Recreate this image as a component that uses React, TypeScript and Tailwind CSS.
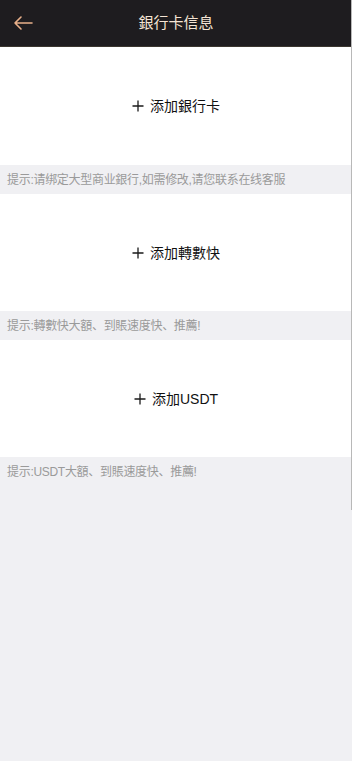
import React from "react";

const font = { fontFamily: '"Liberation Sans", "Noto Sans CJK SC", sans-serif' };

function Plus() {
  return (
    <svg width="12" height="12" viewBox="0 0 12 12" className="mr-[6px]">
      <path d="M6 0.5V11.5M0.5 6H11.5" stroke="#1a1a1a" strokeWidth="1.3" fill="none" />
    </svg>
  );
}

function AddBlock({ label, h }: { label: string; h: string }) {
  return (
    <div className={`${h} bg-white flex items-center justify-center`}>
      <div className="flex items-center text-[14px] text-[#111] leading-none">
        <Plus />
        <span>{label}</span>
      </div>
    </div>
  );
}

function Tip({ text }: { text: string }) {
  return (
    <div className="h-[29px] bg-[#f0f0f3] flex items-center px-[7px] text-[12px] text-[#9a9a9a] tracking-[-0.3px] leading-none">
      {text}
    </div>
  );
}

export default function App() {
  return (
    <div className="relative w-[352px] min-h-[761px] bg-[#f0f0f3]" style={font}>
      <div className="h-[47px] bg-[#1e1c1f] border-b border-[#3b362f] flex items-center relative">
        <div className="w-[44px] flex items-center justify-center pl-[2px]">
          <svg width="22" height="16" viewBox="0 0 22 16">
            <path d="M20 8H3M9 2L3 8L9 14" stroke="#e9b08a" strokeWidth="1.6" fill="none" strokeLinecap="round" strokeLinejoin="round" />
          </svg>
        </div>
        <div className="absolute inset-0 flex items-center justify-center text-[15px] text-[#f4e4d4] pointer-events-none">
          銀行卡信息
        </div>
      </div>
      <AddBlock label="添加銀行卡" h="h-[118px]" />
      <Tip text="提示:请绑定大型商业銀行,如需修改,请您联系在线客服" />
      <AddBlock label="添加轉數快" h="h-[117px]" />
      <Tip text="提示:轉數快大額、到賬速度快、推薦!" />
      <AddBlock label="添加USDT" h="h-[117px]" />
      <Tip text="提示:USDT大額、到賬速度快、推薦!" />
      <div className="absolute right-0 top-0 w-[1px] h-[510px] bg-[#b8b8b8]" />
    </div>
  );
}
